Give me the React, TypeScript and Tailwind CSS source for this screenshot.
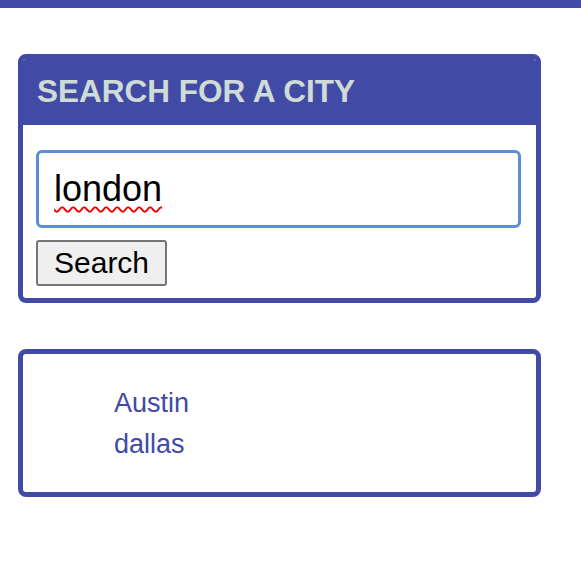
import { useState } from "react";

const cities = ["Austin", "dallas"];

export default function App() {
  const [query] = useState("london");

  return (
    <div className="min-h-[585px] bg-white font-['Liberation_Sans',Arial,sans-serif]">
      <div className="h-2 bg-[#414ba5]" />

      <main className="pl-[18px] pt-[46px]">
        {/* Search card */}
        <section className="w-[523px] overflow-hidden rounded-lg border-[5px] border-[#414ba5]">
          <h1 className="bg-[#414ba5] pb-[16px] pl-[14px] pt-[14px] text-[31.5px] font-bold leading-[1.15] text-[#cfdbd5]">
            SEARCH FOR A CITY
          </h1>
          <div className="px-[13px] pb-[12px] pt-[25px]">
            {/* input box, with the spell-check squiggle drawn as a wavy underline */}
            <div className="w-[485px] rounded-md border-[3px] border-[#5a8fd6] px-[15px] py-[15px] text-[36px] leading-[1.15] text-black">
              <span className="underline decoration-[#ee0000] decoration-wavy decoration-2 underline-offset-[5px]">
                {query}
              </span>
            </div>
            <button className="mt-3 rounded-[3px] border-2 border-[#767676] bg-[#efefef] px-4 py-1 text-[30px] leading-[1.15] text-black">
              Search
            </button>
          </div>
        </section>

        {/* Saved cities */}
        <section className="mt-[46px] w-[523px] rounded-lg border-[5px] border-[#414ba5] pb-[27px] pl-[91px] pt-[29px]">
          <ul>
            {cities.map((c) => (
              <li key={c} className="text-[27px] leading-[41px] text-[#414ba5]">
                {c}
              </li>
            ))}
          </ul>
        </section>
      </main>
    </div>
  );
}
